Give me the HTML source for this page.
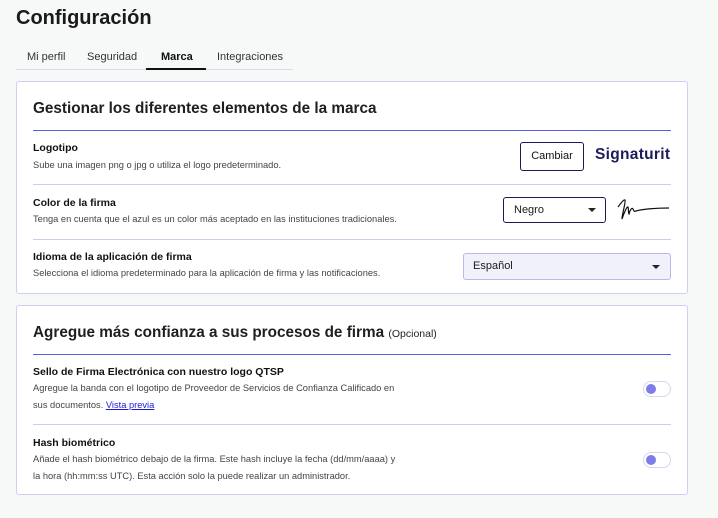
<!DOCTYPE html><html><head><style>
body{margin:0;width:718px;height:518px;background:#f7f8f8;font-family:"Liberation Sans",sans-serif;position:relative;overflow:hidden;color:#1a1a1a}
.a{position:absolute;white-space:nowrap}
.card{position:absolute;left:16px;width:670px;background:#fff;border:1px solid #cfcff2;border-radius:3px}
.h{font-size:15.3px;font-weight:bold;color:#1f1f1f}
.t{font-size:10.5px;color:#111;font-weight:bold}
.d{font-size:9.3px;color:#444;line-height:17px}
.bl{position:absolute;left:33px;width:638px;height:1px;background:#5c5ce6}
.sep{position:absolute;left:33px;width:638px;height:1px;background:#cdcdf3}
.tog{position:absolute;left:643px;width:26px;height:14px;border:1px solid #d6d6ee;border-radius:8px;background:#fff}
.tog:after{content:"";position:absolute;left:2px;top:2px;width:10px;height:10px;border-radius:50%;background:#7d7de8}
.car{position:absolute;width:0;height:0;border-left:4px solid transparent;border-right:4px solid transparent;border-top:4px solid #222}
</style></head><body>
<div class="a" style="left:16px;top:7px;font-size:20px;font-weight:bold">Configuración</div>
<div class="a" style="left:16px;top:69px;width:277px;height:1px;background:#dcdcf0"></div>
<div class="a" style="left:146px;top:68px;width:60px;height:2px;background:#111"></div>
<div class="a" style="left:27px;top:51px;font-size:11px;color:#333">Mi perfil</div>
<div class="a" style="left:87px;top:51px;font-size:11px;color:#333">Seguridad</div>
<div class="a" style="left:161px;top:51px;font-size:11px;color:#111;font-weight:bold">Marca</div>
<div class="a" style="left:217px;top:51px;font-size:11px;color:#333">Integraciones</div>

<div class="card" style="top:81px;height:211px"></div>
<div class="a h" style="left:33px;top:100px">Gestionar los diferentes elementos de la marca</div>
<div class="bl" style="top:130px"></div>
<div class="a t" style="left:33px;top:142px">Logotipo</div>
<div class="a d" style="left:33px;top:157px">Sube una imagen png o jpg o utiliza el logo predeterminado.</div>
<div class="a" style="left:520px;top:142px;width:62px;height:27px;border:1px solid #1b1b4f;border-radius:3px;font-size:11px;text-align:center;line-height:27px;color:#111">Cambiar</div>
<div class="a" style="left:595px;top:146px;font-size:15.5px;color:#1c1c5c;font-weight:bold;letter-spacing:0.3px">Signaturit</div>
<div class="sep" style="top:184px"></div>
<div class="a t" style="left:33px;top:197px">Color de la firma</div>
<div class="a d" style="left:33px;top:211px">Tenga en cuenta que el azul es un color más aceptado en las instituciones tradicionales.</div>
<div class="a" style="left:503px;top:197px;width:101px;height:24px;border:1px solid #1b1b4f;border-radius:3px;font-size:11px;line-height:24px;text-indent:10px">Negro</div>
<div class="car" style="left:588px;top:208px"></div>
<svg class="a" style="left:617px;top:196px" width="54" height="28" viewBox="0 0 54 28"><path d="M1 11 C4 7 7 3 8 4 C9 6 5 18 5 23 C7 17 10 10 11 11 C12 13 11 17 12 18 C13 14 15 11 16 13 C17 15 17 16 19 15 C25 13 40 12 52 12" fill="none" stroke="#111" stroke-width="1.2"/></svg>
<div class="sep" style="top:239px"></div>
<div class="a t" style="left:33px;top:251px">Idioma de la aplicación de firma</div>
<div class="a d" style="left:33px;top:265px">Selecciona el idioma predeterminado para la aplicación de firma y las notificaciones.</div>
<div class="a" style="left:463px;top:253px;width:206px;height:25px;border:1px solid #b9b9ee;background:#f1f1fc;border-radius:3px;font-size:11px;line-height:25px;text-indent:9px">Español</div>
<div class="car" style="left:652px;top:265px"></div>

<div class="card" style="top:305px;height:188px"></div>
<div class="a h" style="left:33px;top:324px">Agregue más confianza a sus procesos de firma <span style="font-size:10.5px;font-weight:400">(Opcional)</span></div>
<div class="bl" style="top:354px"></div>
<div class="a t" style="left:33px;top:366px">Sello de Firma Electrónica con nuestro logo QTSP</div>
<div class="a d" style="left:33px;top:380px">Agregue la banda con el logotipo de Proveedor de Servicios de Confianza Calificado en<br>sus documentos. <span style="color:#1a1ad8;text-decoration:underline">Vista previa</span></div>
<div class="tog" style="top:381px"></div>
<div class="sep" style="top:424px"></div>
<div class="a t" style="left:33px;top:437px">Hash biométrico</div>
<div class="a d" style="left:33px;top:451px">Añade el hash biométrico debajo de la firma. Este hash incluye la fecha (dd/mm/aaaa) y<br>la hora (hh:mm:ss UTC). Esta acción solo la puede realizar un administrador.</div>
<div class="tog" style="top:452px"></div>
</body></html>
